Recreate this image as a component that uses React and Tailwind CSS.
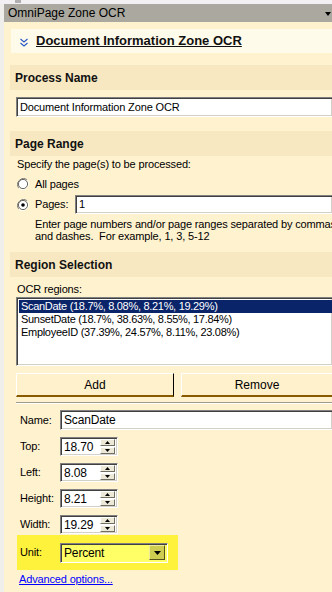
import React from 'react';

const sunken =
  'bg-white border border-t-[#808080] border-l-[#808080] border-b-white border-r-white shadow-[inset_1px_1px_0_#404040,inset_-1px_-1px_0_#d4d0c8]';

const SectionHeader = ({ children, className = '' }) => (
  <div
    className={`ml-[6px] h-[25px] flex items-center pl-[5px] bg-[#f7e8c2] text-[12px] font-bold text-[#111] tracking-normal ${className}`}
  >
    {children}
  </div>
);

const Radio = ({ checked }) => (
  <svg width="12" height="12" viewBox="0 0 12 12" className="shrink-0">
    <path d="M10.2 1.8A6 6 0 0 0 1.8 10.2" fill="none" stroke="#808080" />
    <path d="M10.2 1.8A6 6 0 0 1 1.8 10.2" fill="none" stroke="#ffffff" />
    <circle cx="6" cy="6" r="4.6" fill="#ffffff" stroke="#404040" strokeWidth="0.8" />
    {checked && <circle cx="6" cy="6" r="1.8" fill="#000" />}
  </svg>
);

const SpinBox = ({ value }) => (
  <div className={`${sunken} w-[58px] h-[19px] flex items-center pl-[3px] pr-[2px]`}>
    <span className="flex-1 text-[12px] leading-none">{value}</span>
    <div className="flex flex-col w-[15px] h-[15px] gap-[1px]">
      {['up', 'down'].map((d) => (
        <div
          key={d}
          className="flex-1 bg-[#ece9d8] border border-t-white border-l-white border-b-[#716f64] border-r-[#716f64] flex items-center justify-center"
        >
          <svg width="5" height="3" viewBox="0 0 5 3">
            {d === 'up' ? <path d="M2.5 0L5 3H0z" fill="#000" /> : <path d="M0 0h5L2.5 3z" fill="#000" />}
          </svg>
        </div>
      ))}
    </div>
  </div>
);

const FieldRow = ({ label, children, className = '' }) => (
  <div className={`flex items-center ${className}`}>
    <span className="w-[44px] pl-[4px] text-[11px]">{label}</span>
    {children}
  </div>
);

const XpButton = ({ children, className = '' }) => (
  <button
    className={`h-[24px] bg-[#fff1cc] border border-t-white border-l-white border-r-[#000] border-b-[#8a5a00] border-b-2 text-[12px] text-black ${className}`}
  >
    {children}
  </button>
);

export default function App() {
  const regions = [
    'ScanDate (18.7%, 8.08%, 8.21%, 19.29%)',
    'SunsetDate (18.7%, 38.63%, 8.55%, 17.84%)',
    'EmployeeID (37.39%, 24.57%, 8.11%, 23.08%)',
  ];

  return (
    <div className="w-[332px] h-[592px] overflow-hidden bg-[#efeeea] flex flex-col font-['Liberation_Sans',Arial,sans-serif] text-[11px] tracking-[-0.15px] text-black">
      <div className="h-[4px] bg-[#f2f0f2] relative">
        <div className="absolute left-[15px] top-0 w-[6px] h-[3px] bg-[#b0aeb0]" />
      </div>
      <div className="flex-1 flex pl-[4px]">
        <div className="flex-1 flex flex-col bg-[#fff2cf] min-w-0">
          {/* title bar */}
          <div className="h-[18px] bg-[#aaa89f] flex items-center pl-[4px] pr-[1px] text-[12px] text-black tracking-normal">
            <span className="flex-1">OmniPage Zone OCR</span>
            <svg width="6" height="4" viewBox="0 0 6 4" className="mt-[2px]">
              <path d="M0 0h6L3 4z" fill="#000" />
            </svg>
          </div>

          {/* panel header */}
          <div className="ml-[7px] mt-[7px] h-[24px] bg-[#fffbea] flex items-center">
            <svg width="8" height="9" viewBox="0 0 8 9" className="ml-[9px] mt-[2px]">
              <path d="M0.5 1l3.5 3 3.5-3M0.5 5l3.5 3 3.5-3" fill="none" stroke="#2857c6" strokeWidth="1.1" />
            </svg>
            <span className="ml-[8px] text-[13px] font-bold underline text-[#111] whitespace-nowrap tracking-normal">
              Document Information Zone OCR
            </span>
          </div>

          <SectionHeader className="mt-[12px]">Process Name</SectionHeader>
          <div className={`${sunken} ml-[12px] mt-[7px] h-[20px] flex items-center pl-[3px] text-[11px] border-r-0`}>
            Document Information Zone OCR
          </div>

          <SectionHeader className="mt-[14px]">Page Range</SectionHeader>
          <div className="ml-[13px] mt-[1px] h-[14px] leading-[14px]">Specify the page(s) to be processed:</div>
          <div className="ml-[13px] mt-[6px] h-[14px] flex items-center gap-[6px]">
            <Radio />
            <span>All pages</span>
          </div>
          <div className="ml-[13px] mt-[4px] h-[19px] flex items-center">
            <Radio checked />
            <span className="ml-[6px] w-[40px]">Pages:</span>
            <div className={`${sunken} flex-1 h-[19px] flex items-center pl-[3px] border-r-0`}>1</div>
          </div>
          <div className="ml-[31px] mt-[4px] leading-[12px] whitespace-nowrap overflow-hidden">
            Enter page numbers and/or page ranges separated by commas
            <br />
            and dashes.&nbsp; For example, 1, 3, 5-12
          </div>

          <SectionHeader className="mt-[10px]">Region Selection</SectionHeader>
          <div className="ml-[13px] mt-[6px] h-[12px] leading-[12px]">OCR regions:</div>
          <div className={`${sunken} ml-[12px] mt-[2px] h-[69px] pt-[2px] pl-[2px] border-r-0 tracking-[-0.3px]`}>
            {regions.map((r, i) => (
              <div
                key={r}
                className={`h-[13px] leading-[13px] pl-[2px] whitespace-nowrap ${i === 0 ? 'bg-[#0a246a] text-white' : ''}`}
              >
                {r}
              </div>
            ))}
          </div>
          <div className="ml-[12px] mt-[7px] flex gap-[7px] tracking-normal">
            <XpButton className="w-[158px]">Add</XpButton>
            <XpButton className="flex-1 border-r-0">Remove</XpButton>
          </div>
          <div className="ml-[12px] mt-[5px] h-[2px] border-t border-t-[#a09a8a] border-b border-b-white" />

          <div className="ml-[12px] mt-[6px] flex flex-col">
            <FieldRow label="Name:">
              <div className={`${sunken} flex-1 h-[20px] flex items-center pl-[3px] text-[12px] border-r-0`}>
                ScanDate
              </div>
            </FieldRow>
            <FieldRow label="Top:" className="mt-[7px]">
              <SpinBox value="18.70" />
            </FieldRow>
            <FieldRow label="Left:" className="mt-[7px]">
              <SpinBox value="8.08" />
            </FieldRow>
            <FieldRow label="Height:" className="mt-[7px]">
              <SpinBox value="8.21" />
            </FieldRow>
            <FieldRow label="Width:" className="mt-[7px]">
              <SpinBox value="19.29" />
            </FieldRow>
            <div className="mt-[1px] ml-[1px] w-[161px] h-[35px] bg-[#fff23c] flex items-center">
              <span className="w-[43px] pl-[3px]">Unit:</span>
              <div className="w-[108px] h-[20px] bg-[#ffff66] border border-t-[#808080] border-l-[#808080] border-b-white border-r-white shadow-[inset_1px_1px_0_#404040] flex items-center pl-[3px] pr-[2px]">
                <span className="flex-1 text-[12px]">Percent</span>
                <div className="w-[16px] h-[15px] bg-[#cfcc52] border border-t-[#efed9a] border-l-[#efed9a] border-b-[#55531a] border-r-[#55531a] flex items-center justify-center">
                  <svg width="7" height="4" viewBox="0 0 7 4">
                    <path d="M0 0h7L3.5 4z" fill="#000" />
                  </svg>
                </div>
              </div>
            </div>
            <a href="#" className="mt-[3px] ml-[3px] text-[#0000ff] underline leading-[12px]">
              Advanced options...
            </a>
          </div>
        </div>
      </div>
    </div>
  );
}
